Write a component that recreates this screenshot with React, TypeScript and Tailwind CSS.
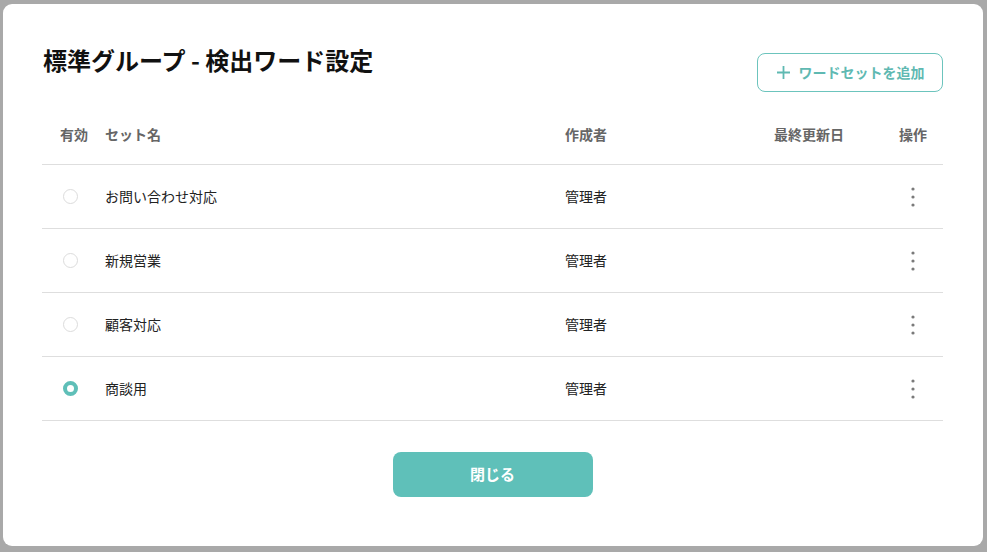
import React from 'react';

const rows = [
  { id: 1, name: 'お問い合わせ対応', owner: '管理者', updated: '', active: false },
  { id: 2, name: '新規営業', owner: '管理者', updated: '', active: false },
  { id: 3, name: '顧客対応', owner: '管理者', updated: '', active: false },
  { id: 4, name: '商談用', owner: '管理者', updated: '', active: true },
];

const font = { fontFamily: '"Noto Sans CJK JP", "Noto Sans", sans-serif' };

const Kebab = () => (
  <svg width="6" height="22" viewBox="0 0 6 22" className="text-[#7a7a7a]">
    <circle cx="3" cy="3" r="1.6" fill="currentColor" />
    <circle cx="3" cy="11" r="1.6" fill="currentColor" />
    <circle cx="3" cy="19" r="1.6" fill="currentColor" />
  </svg>
);

const Radio = ({ checked }: { checked: boolean }) =>
  checked ? (
    <span className="block w-[15px] h-[15px] rounded-full border-[4px] border-[#5fbfb8] bg-white" />
  ) : (
    <span className="block w-[15px] h-[15px] rounded-full border border-[#dcdcdc] bg-white" />
  );

export default function App() {
  return (
    <div className="w-full h-[552px] bg-[#a9a9a9] pt-[4px] pl-[3px] pr-[4px] pb-[6px]" style={font}>
      <div className="h-full bg-white rounded-[9px] pt-[40px] pl-[39px] pr-[40px] pb-[48px] flex flex-col">
        {/* header */}
        <div className="flex justify-between items-start">
          <h1 className="text-[24px] leading-[32px] font-bold text-[#111] pl-[1px]">標準グループ - 検出ワード設定</h1>
          <button className="mt-[9px] h-[39px] w-[186px] border border-[#6cc4bd] rounded-[8px] flex items-center justify-center gap-[8px] text-[#5fb9b2] text-[14px] font-bold">
            <svg width="15" height="15" viewBox="0 0 15 15" fill="none" stroke="currentColor" strokeWidth="1.8">
              <path d="M7.5 1v13M1 7.5h13" />
            </svg>
            ワードセットを追加
          </button>
        </div>

        {/* table */}
        <div>
          <div className="flex items-center h-[73px] pt-[13px] border-b border-[#dedede] text-[14px] font-bold text-[#666]">
            <div className="w-[63px] pl-[18px]">有効</div>
            <div className="w-[460px]">セット名</div>
            <div className="w-[209px]">作成者</div>
            <div className="w-[109px]">最終更新日</div>
            <div className="flex-1 text-center">操作</div>
          </div>
          {rows.map((r) => (
            <div key={r.id} className="flex items-center h-[64px] border-b border-[#dedede] text-[14px] text-[#222]">
              <div className="w-[63px] pl-[21px]">
                <Radio checked={r.active} />
              </div>
              <div className="w-[460px]">{r.name}</div>
              <div className="w-[209px]">{r.owner}</div>
              <div className="w-[109px]">{r.updated}</div>
              <div className="flex-1 flex justify-center">
                <Kebab />
              </div>
            </div>
          ))}
        </div>

        <div className="flex justify-center mt-[31px]">
          <button className="w-[200px] h-[45px] rounded-[8px] bg-[#5fc0b9] text-white text-[15px] font-bold">閉じる</button>
        </div>
      </div>
    </div>
  );
}
